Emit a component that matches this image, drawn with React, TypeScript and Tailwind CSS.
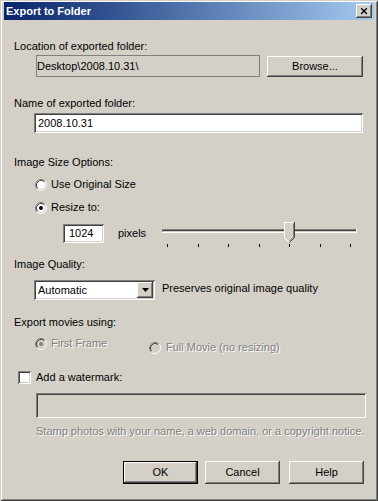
import { X } from "lucide-react";

const raised =
  "shadow-[inset_-1px_-1px_#404040,inset_1px_1px_#ffffff,inset_-2px_-2px_#808080,inset_2px_2px_#d4d0c8]";
const sunken =
  "shadow-[inset_1px_1px_#808080,inset_-1px_-1px_#ffffff,inset_2px_2px_#404040,inset_-2px_-2px_#d4d0c8]";
const disabledText = "text-[#808080] [text-shadow:1px_1px_0_#ffffff]";

const Radio = ({ checked, disabled }: { checked?: boolean; disabled?: boolean }) => (
  <svg width="12" height="12" viewBox="0 0 12 12" className="shrink-0">
    <circle cx="6" cy="6" r="5" fill={disabled ? "#d4d0c8" : "#ffffff"} />
    <path d="M2.11 9.89A5.5 5.5 0 0 1 9.89 2.11" stroke="#808080" fill="none" />
    <path d="M9.89 2.11A5.5 5.5 0 0 1 2.11 9.89" stroke="#ffffff" fill="none" />
    <path d="M2.82 9.18A4.5 4.5 0 0 1 9.18 2.82" stroke="#404040" fill="none" />
    <path d="M9.18 2.82A4.5 4.5 0 0 1 2.82 9.18" stroke="#d4d0c8" fill="none" />
    {checked && <circle cx="6" cy="6" r="2" fill={disabled ? "#808080" : "#000000"} />}
  </svg>
);

const Slider = () => {
  const ticks = [5, 36, 66, 97, 127, 158, 188];
  return (
    <svg width="196" height="28" viewBox="0 0 196 28" className="-mt-[4px] shrink-0">
      <rect x="0" y="9" width="194" height="1" fill="#808080" />
      <rect x="0" y="10" width="194" height="1" fill="#404040" />
      <rect x="0" y="11" width="194" height="1" fill="#d4d0c8" />
      <rect x="0" y="12" width="194" height="1" fill="#ffffff" />
      <rect x="0" y="9" width="1" height="3" fill="#808080" />
      <rect x="194" y="9" width="1" height="4" fill="#ffffff" />
      {ticks.map((t) => (
        <rect key={t} x={t} y="24" width="1" height="3" fill="#000000" />
      ))}
      <g transform="translate(122 2)">
        <polygon points="0,0 10,0 10,15 5,20 0,15" fill="#d4d0c8" />
        <path d="M0.5 15.5V0.5H10" stroke="#ffffff" fill="none" />
        <path d="M0.5 15.5L5 20" stroke="#ffffff" fill="none" />
        <path d="M10.5 0V15.5L5.5 20.5" stroke="#404040" fill="none" />
        <path d="M9.5 1.5V15L5.5 19" stroke="#808080" fill="none" />
      </g>
    </svg>
  );
};

const Button = ({ children, width, isDefault }: { children: string; width: string; isDefault?: boolean }) => (
  <div
    className={`${width} flex items-center justify-center ${raised} ${
      isDefault ? "border border-black" : ""
    }`}
  >
    {children}
  </div>
);

export default function App() {
  return (
    <div
      className="relative w-[378px] h-[501px] bg-[#d4d0c8] text-[11px] leading-[13px] text-black shadow-[inset_1px_1px_#d4d0c8,inset_-1px_-1px_#404040,inset_2px_2px_#ffffff,inset_-2px_-2px_#808080] overflow-hidden"
      style={{ fontFamily: '"Liberation Sans", Arial, sans-serif' }}
    >
      {/* title bar */}
      <div className="mx-[4px] mt-[2px] h-[18px] flex items-center justify-between bg-linear-to-r from-[#0a246a] to-[#a6caf0] pl-[2px] pr-[2px]">
        <span className="font-bold text-white text-[11px]">Export to Folder</span>
        <div className={`w-[16px] h-[14px] bg-[#d4d0c8] flex items-center justify-center ${raised}`}>
          <X size={10} strokeWidth={3.2} color="#000000" className="-mt-[1px]" />
        </div>
      </div>

      <div className="ml-[14px] mt-[20px] h-[13px]">Location of exported folder:</div>
      <div className="mt-[2px] ml-[36px] flex h-[22px]">
        <div className="w-[224px] h-[22px] border border-[#808080] flex items-center">
          Desktop\2008.10.31\
        </div>
        <div className="ml-[7px] mt-[1px] h-[21px]">
          <Button width="w-[96px] h-[21px]">Browse...</Button>
        </div>
      </div>

      <div className="ml-[14px] mt-[20px] h-[13px]">Name of exported folder:</div>
      <div className={`mt-[3px] ml-[34px] w-[329px] h-[20px] bg-white ${sunken} flex items-center pl-[4px]`}>
        2008.10.31
      </div>

      <div className="ml-[14px] mt-[23px] h-[13px]">Image Size Options:</div>
      <div className="mt-[9px] ml-[35px] h-[13px] flex items-center gap-[4px]">
        <Radio />
        <span>Use Original Size</span>
      </div>
      <div className="mt-[10px] ml-[35px] h-[13px] flex items-center gap-[4px]">
        <Radio checked />
        <span>Resize to:</span>
      </div>
      <div className="mt-[10px] ml-[63px] h-[19px] flex items-start">
        <div className={`w-[41px] h-[19px] bg-white ${sunken} flex items-center pl-[6px]`}>1024</div>
        <div className="ml-[14px] w-[44px] h-[19px] flex items-center">pixels</div>
        <Slider />
      </div>

      <div className="ml-[14px] mt-[15px] h-[13px]">Image Quality:</div>
      <div className="mt-[9px] ml-[34px] h-[20px] flex items-start">
        <div className={`w-[121px] h-[20px] bg-white ${sunken} p-[2px] flex`}>
          <div className="flex-1 flex items-center pl-[2px]">Automatic</div>
          <div className={`w-[16px] h-[16px] bg-[#d4d0c8] ${raised} flex items-center justify-center`}>
            <svg width="7" height="4" viewBox="0 0 7 4">
              <polygon points="0,0 7,0 3.5,4" fill="#000000" />
            </svg>
          </div>
        </div>
        <div className="ml-[7px] mt-[2px]">Preserves original image quality</div>
      </div>

      <div className="ml-[14px] mt-[16px] h-[13px]">Export movies using:</div>
      <div className="mt-[8px] ml-[35px] h-[17px] flex items-start">
        <div className="w-[114px] h-[13px] flex items-center gap-[4px]">
          <Radio checked disabled />
          <span className={disabledText}>First Frame</span>
        </div>
        <div className="mt-[4px] h-[13px] flex items-center gap-[5px]">
          <Radio disabled />
          <span className={disabledText}>Full Movie (no resizing)</span>
        </div>
      </div>

      <div className="mt-[17px] ml-[18px] h-[13px] flex items-center gap-[5px]">
        <div className={`w-[13px] h-[13px] bg-white ${sunken}`} />
        <span>Add a watermark:</span>
      </div>
      <div className={`mt-[9px] ml-[36px] w-[330px] h-[25px] bg-[#d4d0c8] ${sunken}`} />
      <div className={`mt-[7px] ml-[36px] h-[13px] ${disabledText}`}>
        Stamp photos with your name, a web domain, or a copyright notice.
      </div>

      <div className="mt-[23px] ml-[123px] h-[23px] flex">
        <Button width="w-[75px] h-[23px]" isDefault>
          OK
        </Button>
        <div className="ml-[7px]">
          <Button width="w-[75px] h-[23px]">Cancel</Button>
        </div>
        <div className="ml-[9px]">
          <Button width="w-[75px] h-[23px]">Help</Button>
        </div>
      </div>
    </div>
  );
}
